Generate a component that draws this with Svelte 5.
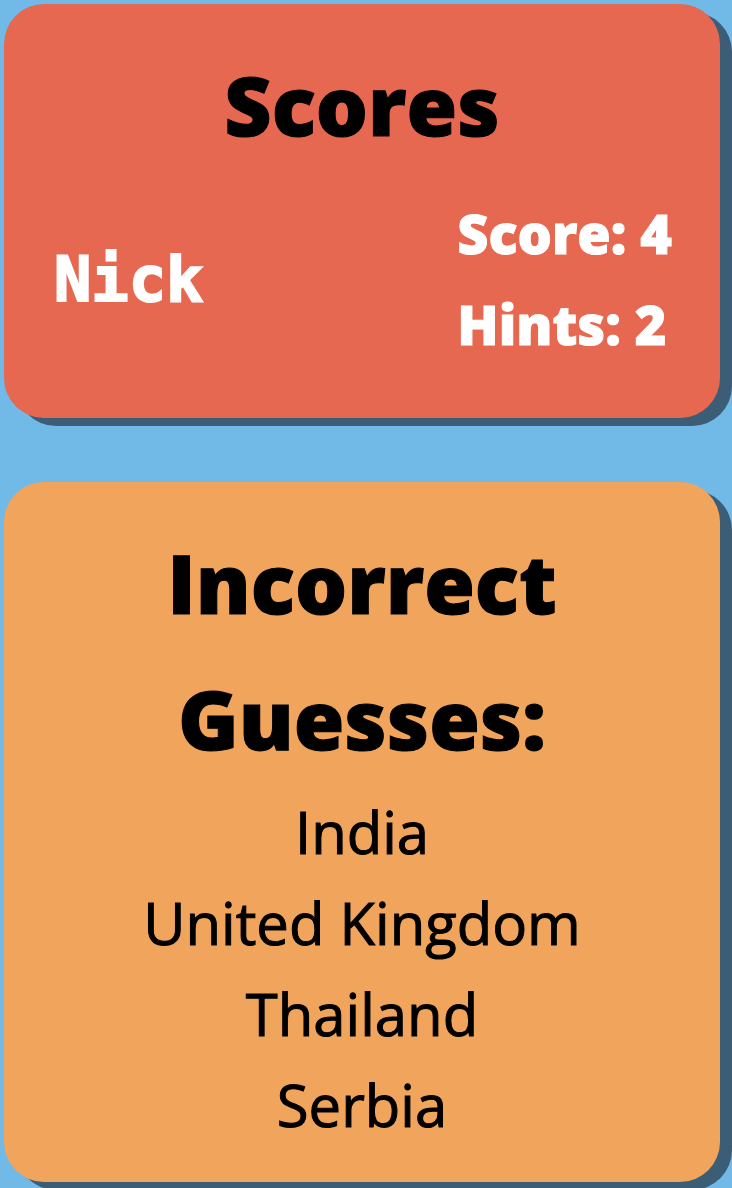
<script>
  const guesses = ['India', 'United Kingdom', 'Thailand', 'Serbia'];
</script>

<main>
  <section class="card scores">
    <h2>Scores</h2>
    <div class="player">
      <h3>Nick</h3>
      <div class="stats">
        <p>Score: 4</p>
        <p>Hints: 2</p>
      </div>
    </div>
  </section>
  <section class="card guesses">
    <h2>Incorrect Guesses:</h2>
    <ul>
      {#each guesses as guess}
        <li>{guess}</li>
      {/each}
    </ul>
  </section>
</main>

<style>
  :global(body) {
    background: #71bae8;
  }
  main {
    display: flex;
    flex-direction: column;
    gap: 64px;
    padding: 4px 12px 6px 4px;
    font-family: "Open Sans", "Noto Sans", sans-serif;
    overflow: hidden;
  }
  .card {
    border-radius: 40px;
    box-shadow: 12px 8px 0 #3b5d76;
    text-align: center;
  }
  .scores {
    background: #e66850;
    padding: 32px 48px 48px;
  }
  .guesses {
    background: #f1a45c;
    padding: 32px 120px;
  }
  h2 {
    margin: 0;
    font-size: 82px;
    line-height: 136px;
    font-weight: 800;
    -webkit-text-stroke: 1px;
  }
  .player {
    display: flex;
    justify-content: space-between;
    align-items: center;
    margin-top: 16px;
    color: #fff;
    text-align: left;
  }
  h3 {
    margin: 0;
    padding-left: 2px;
    font: 700 62px/91px "DejaVu Sans Mono", monospace;
    -webkit-text-stroke: 2px;
  }
  .stats {
    font-size: 54px;
    font-weight: 800;
    line-height: 91px;
    -webkit-text-stroke: 1px;
  }
  p {
    margin: 0;
  }
  ul {
    list-style: none;
    margin: 0;
    padding: 0;
    font-size: 58px;
    line-height: 91px;
    white-space: nowrap;
    -webkit-text-stroke: 1px;
  }
</style>
